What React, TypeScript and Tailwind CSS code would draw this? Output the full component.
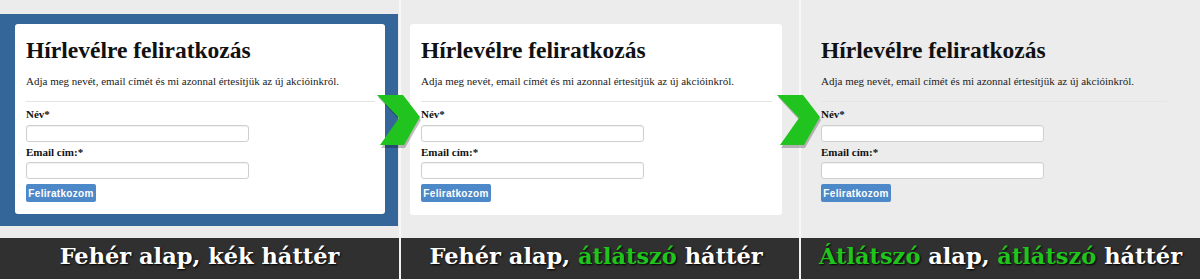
import React from "react";

function SignupCard({ className }: { className: string }) {
  return (
    <div className={`flex flex-col pl-[11px] pr-[10px] pt-[12px] font-['Liberation_Serif',serif] text-[#111] ${className}`}>
      <h2 className="text-[23.5px] leading-[28px] font-bold">Hírlevélre feliratkozás</h2>
      <p className="mt-[10px] text-[11px] leading-[14px] text-[#222]">
        Adja meg nevét, email címét és mi azonnal értesítjük az új akcióinkról.
      </p>
      <div className="mt-[13px] h-px bg-[#e4e4e4]" />
      <label className="mt-[5px] text-[11px] leading-[14px] font-bold">Név*</label>
      <input className="mt-[4px] h-[17px] w-[223px] rounded-[3px] border border-[#cfcfcf] bg-white shadow-[inset_0_1px_1px_rgba(0,0,0,0.06)]" />
      <label className="mt-[3px] text-[11px] leading-[14px] font-bold">Email cím:*</label>
      <input className="mt-[3px] h-[17px] w-[223px] rounded-[3px] border border-[#cfcfcf] bg-white shadow-[inset_0_1px_1px_rgba(0,0,0,0.06)]" />
      <button className="mt-[5px] flex h-[18px] w-[70px] items-center justify-center rounded-[2px] bg-[#4d88c8] font-['Liberation_Sans',sans-serif] text-[10px] font-bold tracking-[0.3px] text-white">
        Feliratkozom
      </button>
    </div>
  );
}

function Chevron({ className }: { className: string }) {
  return (
    <svg className={`absolute ${className}`} width="48" height="56" viewBox="0 0 48 56">
      <polygon points="1,2 27,2 44,25 28,53 4,53 23,26" fill="rgba(0,0,0,0.25)" />
      <polygon points="0,0 26,0 43,22 27,50 3,50 22,23" fill="#21c41f" />
    </svg>
  );
}

const bar = "font-['DejaVu_Serif',serif] text-[22.5px] font-bold text-white [text-shadow:1px_1px_2px_#000] pb-[3px]";

export default function App() {
  return (
    <div className="relative flex h-[279px] w-[1200px] flex-col bg-[#ececec]">
      <div className="flex h-[238px]">
        <div className="w-[399px] pt-[14px]">
          <div className="h-[212px] w-[398px] bg-[#34669a] pl-[15px] pt-[10px]">
            <SignupCard className="h-[190px] w-[370px] rounded-[3px] bg-white" />
          </div>
        </div>
        <div className="w-[2px] bg-[#f8f8f8]" />
        <div className="w-[398px] pl-[9px] pt-[24px]">
          <SignupCard className="h-[191px] w-[372px] rounded-[3px] bg-white" />
        </div>
        <div className="w-[2px] bg-[#f8f8f8]" />
        <div className="flex-1 pl-[9px] pt-[24px]">
          <SignupCard className="h-[191px] w-[367px]" />
        </div>
      </div>
      <div className="flex h-[41px] bg-[#303030]">
        <div className={`flex w-[399px] items-center justify-center ${bar}`}>Fehér alap, kék háttér</div>
        <div className="w-[2px] bg-[#f2f2f2]" />
        <div className={`flex w-[398px] items-center justify-center pr-[8px] ${bar}`}>
          Fehér alap,&nbsp;<span className="text-[#1fc41c]">átlátszó</span>&nbsp;háttér
        </div>
        <div className="w-[2px] bg-[#f2f2f2]" />
        <div className={`flex flex-1 items-center justify-center ${bar}`}>
          <span className="text-[#1fc41c]">Átlátszó</span>&nbsp;alap,&nbsp;<span className="text-[#1fc41c]">átlátszó</span>&nbsp;háttér
        </div>
      </div>
      <Chevron className="left-[377px] top-[95px]" />
      <Chevron className="left-[777px] top-[95px]" />
    </div>
  );
}
